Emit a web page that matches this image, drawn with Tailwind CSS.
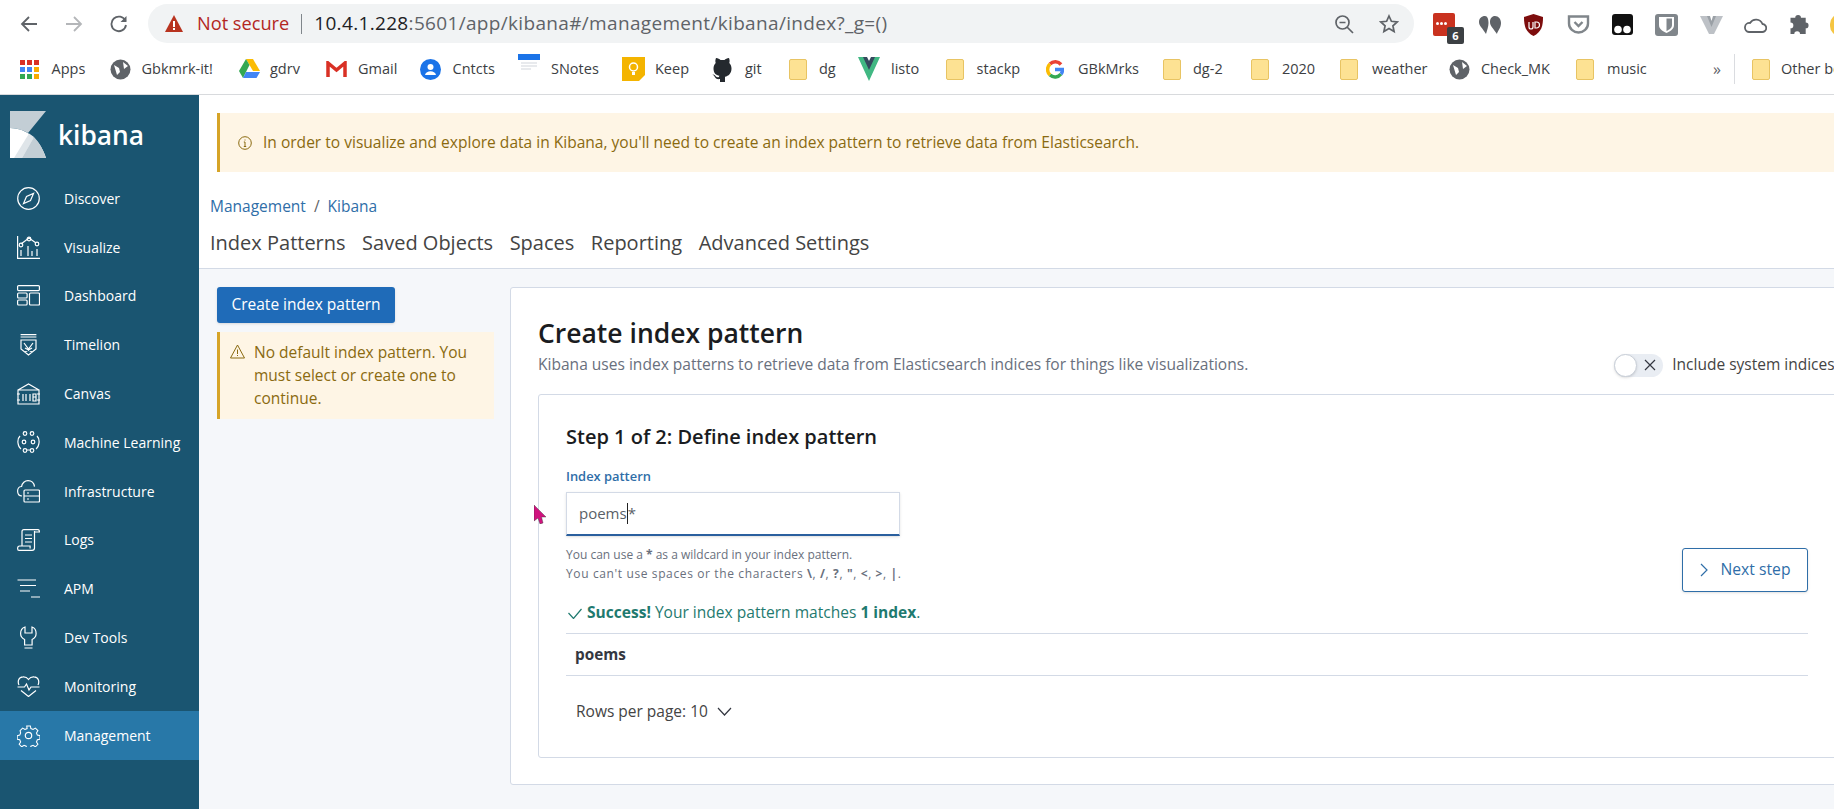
<!DOCTYPE html>
<html lang="en">
<head>
  <meta charset="UTF-8" />
  <title>Kibana</title>
  <script src="https://cdn.jsdelivr.net/npm/@tailwindcss/browser@4"></script>
</head>
<body class="w-[1834px] h-[809px] overflow-hidden bg-white font-['Open_Sans',sans-serif]">

  <!-- browser toolbar -->
  <div class="h-[47px] flex items-center bg-white">
    <div class="w-[148px] shrink-0 flex items-center pl-[20px] gap-[27px] text-[#5f6368]">
      <svg class="w-[18px] h-[18px]" viewBox="0 0 18 18" fill="none" stroke="currentColor" stroke-width="1.8"><path d="M17 9H2M9 2 2 9l7 7"/></svg>
      <svg class="w-[18px] h-[18px] text-[#b4b6b9]" viewBox="0 0 18 18" fill="none" stroke="currentColor" stroke-width="1.8"><path d="M1 9h15M9 2l7 7-7 7"/></svg>
      <svg class="w-[18px] h-[18px]" viewBox="0 0 18 18" fill="none" stroke="currentColor" stroke-width="1.8"><path d="M15.5 6A7.3 7.3 0 1 0 16 10"/><path d="M16.5 1v6h-6" fill="currentColor" stroke="none"/></svg>
    </div>
    <div class="w-[1266px] shrink-0 h-[39px] rounded-full bg-[#f1f3f4] flex items-center pl-[17px] pr-[15px] text-[18.200px]">
      <svg class="w-[18px] h-[17px]" viewBox="0 0 18 17"><path d="M9 0 18 17H0Z" fill="#b8331f"/><path d="M8 6h2v6H8zM8 13h2v2H8z" fill="#fff"/></svg>
      <span class="ml-[14px] text-[#b3261e]">Not secure</span>
      <span class="ml-[12px] w-px h-[20px] bg-[#80868b]"></span>
      <span class="ml-[12px] text-[19px] tracking-[0.33px] text-[#202124]">10.4.1.228<span class="text-[#5f6368]">:5601/app/kibana#/management/kibana/index?_g=()</span></span>
      <svg class="ml-auto w-[20px] h-[20px]" viewBox="0 0 20 20" fill="none" stroke="#5f6368" stroke-width="1.7"><circle cx="8.5" cy="8.5" r="6.5"/><path d="M13 13l6 6M5.5 8.5h6"/></svg>
      <svg class="ml-[25px] w-[20px] h-[20px]" viewBox="0 0 20 20" fill="none" stroke="#5f6368" stroke-width="1.7"><path d="M10 2l2.4 5.3 5.8.6-4.3 3.9 1.2 5.7-5.1-2.9-5.1 2.9 1.2-5.7L1.8 7.9l5.8-.6Z"/></svg>
    </div>
    <!-- extensions -->
    <div class="flex items-center pl-[19px] pt-[2px] [&>*]:shrink-0">
      <div class="relative w-[22px] h-[23px] rounded-[2px] bg-[#c9321f]">
        <span class="absolute left-[3px] top-[9px] flex gap-[1px]"><i class="w-[3px] h-[3px] rounded-full bg-white"></i><i class="w-[3px] h-[3px] rounded-full bg-white"></i><i class="w-[3px] h-[3px] rounded-full bg-white"></i></span>
        <span class="absolute left-[14px] top-[14px] w-[17px] h-[17px] rounded-[2px] bg-[#3c4043] text-white text-[11px] leading-[17px] text-center font-bold">6</span>
      </div>
      <svg class="ml-[24px] w-[22px] h-[18px]" viewBox="0 0 22 18" fill="#5f6368"><path d="M6 0C2.500 0 0 2.500 0 6c0 4 3.500 6 7 12 1-4 2.500-7 2.500-11C9.500 3 8.500 0 6 0ZM16 0c-3 0-5 2.500-5 6 0 4 3 6 7 12 .5-3 4-6 4-11 0-4-2.500-7-6-7Z"/></svg>
      <svg class="ml-[23px] w-[19px] h-[22px]" viewBox="0 0 19 22"><path d="M9.500 0 19 3c0 9-1.500 15-9.500 19C1.500 18 0 12 0 3Z" fill="#7d0d0d"/><path d="M5 8v5a2 2 0 0 0 4 0V8M11 14V8h1.500a3 3 0 0 1 0 6Z" fill="none" stroke="#fff" stroke-width="1.200"/></svg>
      <svg class="ml-[24px] w-[23px] h-[19px]" viewBox="0 0 23 19" fill="none" stroke="#80868b" stroke-width="2.400"><path d="M2 1.500h19v7c0 5-4.500 9-9.500 9S2 13.500 2 8.500Z"/><path d="M7.500 7l4 4 4-4"/></svg>
      <svg class="ml-[22px] w-[21px] h-[21px]" viewBox="0 0 21 21"><path d="M3 0h15a3 3 0 0 1 3 3v15a3 3 0 0 1-3 3H3a3 3 0 0 1-3-3V3a3 3 0 0 1 3-3Z" fill="#111"/><circle cx="6" cy="15.500" r="3.800" fill="#fff"/><circle cx="15" cy="15.500" r="3.800" fill="#fff"/></svg>
      <svg class="ml-[22px] w-[23px] h-[22px]" viewBox="0 0 23 22"><rect width="23" height="22" rx="3" fill="#80868b"/><path d="M4 3h15v8c0 4-3.500 6-7.500 8C7.500 17 4 15 4 11Z" fill="#fff"/><path d="M11.500 4.500H17v6.500c0 3-2.500 4.500-5.500 6Z" fill="#80868b"/></svg>
      <svg class="ml-[22px] w-[23px] h-[18px]" viewBox="0 0 23 18"><path d="M0 0h8l3.500 9L15 0h8L14 18H9Z" fill="#bdc1c6"/><path d="M7 0h3l1.500 5L13 0h3l-4.500 11Z" fill="#9aa0a6"/></svg>
      <svg class="ml-[21px] w-[23px] h-[16px]" viewBox="0 0 23 16" fill="none" stroke="#5f6368" stroke-width="1.800"><path d="M5 15h13a4 4 0 0 0 .5-8A7 7 0 0 0 6 6a4.500 4.500 0 0 0-1 9Z"/></svg>
      <svg class="ml-[23px] w-[20px] h-[19px]" viewBox="0 0 20 20" fill="#5f6368"><path d="M8 0a3 3 0 0 1 3 3h5v5a3 3 0 1 1 0 6v6h-6a3 3 0 1 0-6 0H0v-6a3 3 0 1 0 0-6V3h5a3 3 0 0 1 3-3Z"/></svg>
      <div class="ml-[20px] w-[20px] h-[22px] rounded-full bg-[#f5c542]"></div>
    </div>
  </div>

  <!-- bookmarks -->
  <div class="h-[48px] flex items-center text-[14.500px] text-[#3c4043] border-b border-[#d8dadd] pl-[20px] pb-[3px] whitespace-nowrap overflow-hidden [&>*]:shrink-0">
    <svg class="w-[19px] h-[19px] mr-[12.500px]" viewBox="0 0 19 19"><g fill="#d93025"><rect width="5" height="5"/><rect x="7" width="5" height="5"/><rect x="14" width="5" height="5"/></g><g fill="#4285f4"><rect y="7" width="5" height="5"/><rect x="7" y="7" width="5" height="5"/></g><rect x="14" y="7" width="5" height="5" fill="#f9ab00"/><g fill="#34a853"><rect y="14" width="5" height="5"/><rect x="7" y="14" width="5" height="5"/></g><rect x="14" y="14" width="5" height="5" fill="#f9ab00"/></svg>
    <span class="w-[58.500px]">Apps</span>
    <svg class="w-[21px] h-[21px] mr-[10.500px]" viewBox="0 0 21 21"><circle cx="10.500" cy="10.500" r="10" fill="#5f6368"/><path d="M4 6l5 3 1 4-3 3ZM13 3l5 4-4 3Z" fill="#fff"/></svg>
    <span class="w-[97.500px]">Gbkmrk-it!</span>
    <svg class="w-[21px] h-[20px] mr-[10px]" viewBox="0 0 21 20"><path d="M7 0h7l7 12h-7Z" fill="#fbbc04"/><path d="M7 0l3.500 6L4 19 0 12Z" fill="#34a853"/><path d="M7 13h14l-3.500 6H4Z" fill="#4285f4"/></svg>
    <span class="w-[56px]">gdrv</span>
    <svg class="w-[21px] h-[16px] mr-[11px]" viewBox="0 0 21 16"><path d="M2 16V2l8.500 7L19 2v14" fill="none" stroke="#d93025" stroke-width="3.500"/></svg>
    <span class="w-[62px]">Gmail</span>
    <svg class="w-[21px] h-[21px] mr-[11.600px]" viewBox="0 0 21 21"><circle cx="10.500" cy="10.500" r="10.500" fill="#1a73e8"/><circle cx="10.500" cy="8" r="3" fill="#fff"/><path d="M5 16c1-5 10-5 11 0Z" fill="#fff"/></svg>
    <span class="w-[65.400px]">Cntcts</span>
    <svg class="w-[22px] h-[20px] mr-[11px] -mt-[10px]" viewBox="0 0 22 20"><rect width="22" height="6" fill="#1a73e8"/><path d="M3 9h16M3 12h16M3 15h10" stroke="#e8eaed" stroke-width="2"/></svg>
    <span class="w-[71px]">SNotes</span>
    <svg class="w-[23px] h-[24px] mr-[10px]" viewBox="0 0 23 24"><path d="M0 0h23v18l-6 6H0Z" fill="#f4b400"/><circle cx="11.500" cy="10" r="4" fill="none" stroke="#fff" stroke-width="1.500"/><path d="M10 15h3v3h-3z" fill="#fff"/></svg>
    <span class="w-[56px]">Keep</span>
    <svg class="w-[23px] h-[25px] mr-[11px]" viewBox="0 0 23 25"><path d="M5 1c2 0 3.500 1 4.500 2h4C14.500 2 16 1 18 1c.8 2 .8 3.500.3 5 1.500 1.500 2.200 3.500 2.200 5.500 0 5-3 7.500-6.500 8.300V25H9v-3c-3 .5-4.500-.5-5.500-2.500-.5-1-1.300-1.500-2-2 1.500-.3 2.500.7 3.200 1.700.8 1 2 1.300 3.300.8 0-.5.2-.8.5-1.200C5 18.300 2.500 16 2.500 11.500c0-2 .7-4 2.200-5.500C4.200 4.500 4.200 3 5 1Z" fill="#24292e"/></svg>
    <span class="w-[44px]">git</span>
    <span class="w-[18px] h-[21px] mr-[12px] rounded-[2px] bg-[#fde293] border border-[#e8c463]"></span>
    <span class="w-[39px]">dg</span>
    <svg class="w-[22px] h-[24px] mr-[11px]" viewBox="0 0 22 24"><path d="M0 0h8l3 5 3-5h8L11 24Z" fill="#41b883"/><path d="M5 0h4l2 4 2-4h4L11 13Z" fill="#35495e"/></svg>
    <span class="w-[55px]">listo</span>
    <span class="w-[18px] h-[21px] mr-[12.600px] rounded-[2px] bg-[#fde293] border border-[#e8c463]"></span>
    <span class="w-[69.400px]">stackp</span>
    <svg class="w-[18px] h-[19px] mr-[14px]" viewBox="0 0 18 19" fill="none" stroke-width="3.500"><path d="M15 4.500A7.500 7.500 0 0 0 4 4" stroke="#ea4335"/><path d="M4 4a7.500 7.500 0 0 0 0 11" stroke="#fbbc04"/><path d="M4 15a7.500 7.500 0 0 0 11-1" stroke="#34a853"/><path d="M15 14c1-1 1.500-3 1.500-4.500H9" stroke="#4285f4"/></svg>
    <span class="w-[85px]">GBkMrks</span>
    <span class="w-[18px] h-[21px] mr-[12px] rounded-[2px] bg-[#fde293] border border-[#e8c463]"></span>
    <span class="w-[58px]">dg-2</span>
    <span class="w-[18px] h-[21px] mr-[13px] rounded-[2px] bg-[#fde293] border border-[#e8c463]"></span>
    <span class="w-[58px]">2020</span>
    <span class="w-[18px] h-[21px] mr-[14px] rounded-[2px] bg-[#fde293] border border-[#e8c463]"></span>
    <span class="w-[77px]">weather</span>
    <svg class="w-[21px] h-[21px] mr-[11px]" viewBox="0 0 21 21"><circle cx="10.500" cy="10.500" r="10" fill="#5f6368"/><path d="M4 6l5 3 1 4-3 3ZM13 3l5 4-4 3Z" fill="#fff"/></svg>
    <span class="w-[95px]">Check_MK</span>
    <span class="w-[18px] h-[21px] mr-[13px] rounded-[2px] bg-[#fde293] border border-[#e8c463]"></span>
    <span class="w-[106px]">music</span>
    <span class="w-[21px] text-[#5f6368] text-[16px]">»</span>
    <span class="w-px h-[30px] bg-[#dadce0] mr-[17px]"></span>
    <span class="w-[18px] h-[21px] mr-[11px] rounded-[2px] bg-[#fde293] border border-[#e8c463]"></span>
    <span>Other bookmarks</span>
  </div>

  <div class="flex h-[714px] overflow-hidden">
    <!-- kibana sidebar -->
    <aside class="w-[199px] shrink-0 bg-[#1a5571] text-white text-[14px]">
      <div class="h-[79px] flex items-start pl-[10px] pt-[16px]">
        <svg class="w-[36px] h-[47px] shrink-0" viewBox="0 0 36 47"><path d="M0 0h36L18 22C13 19 7 17 0 17Z" fill="#c3ced5"/><path d="M0 17C16 17 30 28 36 47H0Z" fill="#fff"/><path d="M4 47 19 22.500 24 26 12 47Z" fill="#dfe5e9"/><path d="M12 47 24 26C29 31 33 38 36 47Z" fill="#c3ced5"/></svg>
        <span class="ml-[12px] mt-[3px] text-[26.300px] leading-[42px] font-semibold">kibana</span>
      </div>
      <nav class="flex flex-col">
        <a class="h-[48.800px] flex items-center pl-[17px] gap-[24px]"><svg class="w-[23px] h-[23px] shrink-0" viewBox="0 0 23 23" fill="none" stroke="#fff" stroke-width="1.200"><circle cx="11.500" cy="11.500" r="10.800"/><path d="M16.500 6.500 13.500 13.500 6.500 16.500 9.500 9.500Z"/></svg>Discover</a>
        <a class="h-[48.800px] flex items-center pl-[17px] gap-[24px]"><svg class="w-[23px] h-[23px] shrink-0" viewBox="0 0 23 23" fill="none" stroke="#fff" stroke-width="1.200"><path d="M.6 0v22.400H23M4 8l8-6 7 5"/><circle cx="4" cy="9" r="1.800"/><circle cx="12" cy="3" r="1.800"/><circle cx="20" cy="8" r="1.800"/><path d="M4 14v6M11 10v10M15 15v5M20 13v7"/></svg>Visualize</a>
        <a class="h-[48.800px] flex items-center pl-[17px] gap-[24px]"><svg class="w-[23px] h-[21px] shrink-0" viewBox="0 0 23 21" fill="none" stroke="#fff" stroke-width="1.200"><rect x=".6" y=".6" width="21.800" height="5" rx="1"/><rect x=".6" y="8" width="9.500" height="5" rx="1"/><rect x=".6" y="15" width="9.500" height="5" rx="1"/><rect x="12.500" y="8" width="10" height="12" rx="1"/></svg>Dashboard</a>
        <a class="h-[48.800px] flex items-center pl-[20px] gap-[27px]"><svg class="w-[17px] h-[22px] shrink-0" viewBox="0 0 17 22" fill="none" stroke="#fff" stroke-width="1.200"><path d="M.6.6h15.800M.6 3h15.800M1 6h15v9l-7.500 6L1 15ZM4 9l4.500 6 4.500-6M5 18l7-4M12 18l-7-4"/></svg>Timelion</a>
        <a class="h-[48.800px] flex items-center pl-[17px] gap-[24px]"><svg class="w-[23px] h-[22px] shrink-0" viewBox="0 0 23 22" fill="none" stroke="#fff" stroke-width="1.200"><path d="M1 7 11.500 1 22 7M1 7h21v14H1ZM0 11h3M0 17h3M20 11h3M20 17h3M6 11v7M9 11v7M13 11v7M16 11h3v7h-3ZM16 14h3"/></svg>Canvas</a>
        <a class="h-[48.800px] flex items-center pl-[17px] gap-[24px]"><svg class="w-[23px] h-[22px] shrink-0" viewBox="0 0 23 22" fill="none" stroke="#fff" stroke-width="1.200"><circle cx="8" cy="2.500" r="1.800"/><circle cx="15" cy="2.500" r="1.800"/><circle cx="7" cy="11" r="1.800"/><circle cx="16" cy="11" r="1.800"/><circle cx="8" cy="19.500" r="1.800"/><circle cx="15" cy="19.500" r="1.800"/><path d="M3 5C1 7 .6 9 1 12c.4 3 1.500 5 3 6M20 5c2 2 2.400 4 2 7-.4 3-1.500 5-3 6M10 19h3"/></svg>Machine Learning</a>
        <a class="h-[48.800px] flex items-center pl-[17px] gap-[24px]"><svg class="w-[23px] h-[23px] shrink-0" viewBox="0 0 23 23" fill="none" stroke="#fff" stroke-width="1.200"><path d="M5 16C2 16 .6 14 .6 11c0-3 2-4.500 4-4.500C5 3 8 .6 11 .6c3.500 0 6 2.500 6.500 6"/><rect x="7" y="10" width="15.500" height="12" rx="1"/><path d="M7 16h15.500M10 13h2M10 19h2"/></svg>Infrastructure</a>
        <a class="h-[48.800px] flex items-center pl-[17px] gap-[24px]"><svg class="w-[23px] h-[22px] shrink-0" viewBox="0 0 23 22" fill="none" stroke="#fff" stroke-width="1.200"><path d="M5 17V2.500C5 1.500 6 .6 7 .6h14c1 0 1.400 1 1.400 2.400h-5M17.500 2v17c0 1.500-1 2.400-2.400 2.400H2c-1 0-1.400-1-1.400-2 0-1.500 1-2.400 2-2.400h10.500v2.500M8 6h7M8 9.500h7M8 13h7"/></svg>Logs</a>
        <a class="h-[48.800px] flex items-center pl-[17px] gap-[24px]"><svg class="w-[23px] h-[19px] shrink-0" viewBox="0 0 23 19" fill="none" stroke="#fff" stroke-width="1.200"><path d="M.5 1H19M3 6.500h16M3 12h10M14 18h9"/></svg>APM</a>
        <a class="h-[48.800px] flex items-center pl-[20px] gap-[27px]"><svg class="w-[17px] h-[23px] shrink-0" viewBox="0 0 17 23" fill="none" stroke="#fff" stroke-width="1.200"><path d="M5 1C2 2 .6 5 .6 7.500c0 3 2 5 4 6v5.500h7.500v-5.500c2-1 4-3 4-6C16.100 5 15 2 12 1v6H5ZM4.500 22h8"/></svg>Dev Tools</a>
        <a class="h-[48.800px] flex items-center pl-[17px] gap-[24px]"><svg class="w-[23px] h-[21px] shrink-0" viewBox="0 0 23 21" fill="none" stroke="#fff" stroke-width="1.200"><path d="M2 9C.6 6 1 1 6 .8 9 .6 10.500 2 11.500 3.500 12.500 2 14 .6 17 .8c5 .2 5.400 5.200 4 8.200M.5 11h7l2-3 2.500 6 2-3h8.500M4 14.500l7.500 6 7.500-6"/></svg>Monitoring</a>
        <a class="h-[48.800px] flex items-center pl-[17px] gap-[24px] bg-[#2878a8]"><svg class="w-[23px] h-[23px] shrink-0" viewBox="0 0 23 23" fill="none" stroke="#fff" stroke-width="1.200"><circle cx="11.500" cy="11.500" r="3.200"/><path d="M9.500 .8h4l.6 3 2.400 1 2.600-1.600 2.800 2.800-1.600 2.600 1 2.400 3 .6-.2 4-2.800.6-1 2.400 1.600 2.600-2.800 2.800-2.600-1.600-2.400 1-.6 2.800h-4l-.6-2.800-2.400-1-2.600 1.600-2.800-2.800 1.600-2.600-1-2.400-2.800-.6v-4l2.800-.6 1-2.400L2.100 6l2.800-2.800 2.600 1.600 2.400-1Z" transform="translate(1.200 1.200) scale(.9)"/></svg>Management</a>
      </nav>
    </aside>

    <main class="flex-1 min-w-0 flex flex-col">
      <!-- white header area -->
      <div class="bg-white border-b border-[#d3dae6] h-[174px] shrink-0 pt-[18px]">
        <div class="ml-[18px] h-[59px] bg-[#fef5e5] border-l-[3px] border-[#d6a428] flex items-center pl-[18px] text-[15.550px] text-[#8a6a10]">
          <svg class="w-[14px] h-[14px] mr-[11px]" viewBox="0 0 14 14" fill="none" stroke="currentColor" stroke-width="1"><circle cx="7" cy="7" r="6.300"/><path d="M7 6v4.500M5.800 10.500h2.400M5.800 6H7M7 3.500v1"/></svg>
          In order to visualize and explore data in Kibana, you'll need to create an index pattern to retrieve data from Elasticsearch.
        </div>
        <div class="ml-[11px] mt-[24px] text-[15.500px] leading-[20px] text-[#5f6368]"><span class="text-[#2f6ea8]">Management</span><span class="mx-[8px]">/</span><span class="text-[#2f6ea8]">Kibana</span></div>
        <div class="ml-[11px] mt-[14px] flex gap-[16.500px] text-[20px] leading-[26px] text-[#444]">
          <span>Index Patterns</span><span>Saved Objects</span><span>Spaces</span><span>Reporting</span><span>Advanced Settings</span>
        </div>
      </div>

      <!-- grey content area -->
      <div class="flex-1 bg-[#f5f7fa] flex pt-[18px] pl-[18px] items-start">
        <div class="w-[277px] shrink-0">
          <button class="w-[178px] h-[36px] rounded-[3px] bg-[#1f6bb8] text-white text-[15.500px] font-medium shadow-sm">Create index pattern</button>
          <div class="mt-[9px] h-[87px] bg-[#fef5e5] border-l-[3px] border-[#d6a428] flex pl-[10px] pt-[9px] text-[15.500px] leading-[23px] text-[#8a6a10]">
            <svg class="w-[15px] h-[15px] mt-[3px] mr-[9px] shrink-0" viewBox="0 0 15 15" fill="none" stroke="currentColor" stroke-width="1"><path d="M7.500 1 14.500 14H.5ZM7.500 5.500v4.500M7.500 11v1"/></svg>
            <p>No default index pattern. You must select or create one to continue.</p>
          </div>
        </div>
        <section class="ml-[16px] w-[1400px] h-[498px] shrink-0 bg-white border border-[#d3dae6] rounded-[3px] pl-[27px] pt-[24px]">
          <div class="flex">
            <div>
              <h1 class="-mb-[1px] text-[26.500px] leading-[42px] font-semibold text-[#1a1c21]">Create index pattern</h1>
              <p class="text-[15.550px] leading-[22px] text-[#69707d]">Kibana uses index patterns to retrieve data from Elasticsearch indices for things like visualizations.</p>
            </div>
            <div class="ml-[366px] mt-[41px] h-[24px] flex items-center">
              <span class="w-[49px] h-[23px] rounded-full bg-[#e9edf3] flex items-center">
                <span class="w-[23px] h-[23px] rounded-full bg-white border border-[#c9cfd8] shadow-sm"></span>
                <svg class="ml-[7px] w-[12px] h-[12px]" viewBox="0 0 12 12" stroke="#343741" stroke-width="1.200"><path d="M1 1l10 10M11 1 1 11"/></svg>
              </span>
              <span class="ml-[9px] text-[15.500px] text-[#444] whitespace-nowrap">Include system indices</span>
            </div>
          </div>
          <div class="mt-[17px] w-[1330px] h-[364px] border border-[#d3dae6] rounded-[3px] pl-[27px] pr-[1px] pt-[27px]">
            <div class="w-[1242px]">
              <h2 class="text-[20px] leading-[30px] font-semibold text-[#1a1c21]">Step 1 of 2: Define index pattern</h2>
              <div class="flex items-end justify-between">
                <div>
                  <label class="block mt-[14px] text-[12.900px] leading-[20px] font-semibold text-[#2f6ea8]">Index pattern</label>
                  <div class="mt-[6px] w-[334px] h-[44px] border border-[#d3dae6] border-b-2 border-b-[#2a5f9e] flex items-center pl-[12px] text-[15px] text-[#5a5f68] shadow-sm relative">
                    poems<span class="w-px h-[21px] bg-[#222]"></span>*
                    <!-- mouse pointer -->
                    <svg class="absolute -left-[33px] top-[12px] w-[13px] h-[19px]" viewBox="0 0 13 19"><path d="M0 0 12 12H7.500L9 18l-3 1-2-6-4 3Z" fill="#d0127e" stroke="#333" stroke-width=".4"/></svg>
                  </div>
                  <div class="mt-[9px] text-[12px] leading-[19px] text-[#69707d] whitespace-nowrap">
                    <p>You can use a <b>*</b> as a wildcard in your index pattern.</p>
                    <p class="tracking-[0.62px]">You can't use spaces or the characters <b>\</b>, <b>/</b>, <b>?</b>, <b>"</b>, <b>&lt;</b>, <b>&gt;</b>, <b>|</b>.</p>
                  </div>
                </div>
                <button class="-mb-[9px] w-[126px] h-[44px] border border-[#2f6ea8] rounded-[3px] flex items-center justify-center gap-[13px] text-[15.700px] text-[#2f6ea8] bg-white shadow-sm">
                  <svg class="w-[8px] h-[14px]" viewBox="0 0 8 14" fill="none" stroke="currentColor" stroke-width="1.200"><path d="M1 1l6 6-6 6"/></svg>
                  Next step
                </button>
              </div>
              <div class="mt-[18px] flex items-center text-[15.550px] leading-[22px] text-[#1f7a6f]">
                <svg class="ml-[2px] mr-[5px] w-[14px] h-[11px] mt-[3px]" viewBox="0 0 14 11" fill="none" stroke="currentColor" stroke-width="1.200"><path d="M.5 5l5 5.500L13.500 1"/></svg>
                <span><b class="font-bold">Success!</b> Your index pattern matches <b class="font-bold">1 index</b>.</span>
              </div>
              <div class="mt-[10px] h-[43px] border-y border-[#d3dae6] flex items-center pl-[9px] text-[15.300px] font-bold text-[#343741]">poems</div>
              <div class="mt-[24px] flex items-center pl-[10px] text-[15.500px] leading-[22px] text-[#444]">
                Rows per page: 10
                <svg class="ml-[9px] w-[15px] h-[9px]" viewBox="0 0 15 9" fill="none" stroke="#343741" stroke-width="1.200"><path d="M1 1l6.500 7L14 1"/></svg>
              </div>
            </div>
          </div>
        </section>
      </div>
    </main>
  </div>
</body>
</html>
